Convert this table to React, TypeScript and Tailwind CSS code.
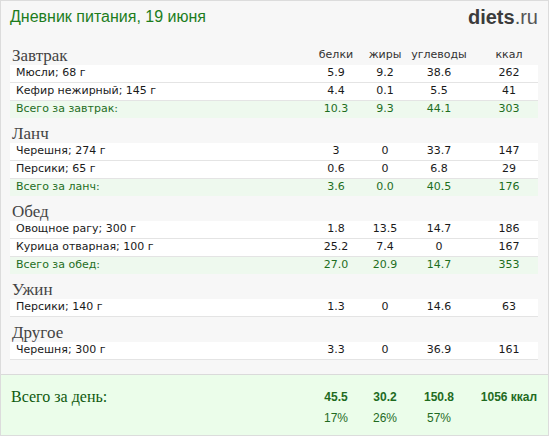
import React from "react";

type Item = { name: string; p: string; f: string; c: string; k: string };
type Section = { title: string; items: Item[]; total?: { label: string; p: string; f: string; c: string; k: string } };

const sections: Section[] = [
  {
    title: "Завтрак",
    items: [
      { name: "Мюсли; 68 г", p: "5.9", f: "9.2", c: "38.6", k: "262" },
      { name: "Кефир нежирный; 145 г", p: "4.4", f: "0.1", c: "5.5", k: "41" },
    ],
    total: { label: "Всего за завтрак:", p: "10.3", f: "9.3", c: "44.1", k: "303" },
  },
  {
    title: "Ланч",
    items: [
      { name: "Черешня; 274 г", p: "3", f: "0", c: "33.7", k: "147" },
      { name: "Персики; 65 г", p: "0.6", f: "0", c: "6.8", k: "29" },
    ],
    total: { label: "Всего за ланч:", p: "3.6", f: "0.0", c: "40.5", k: "176" },
  },
  {
    title: "Обед",
    items: [
      { name: "Овощное рагу; 300 г", p: "1.8", f: "13.5", c: "14.7", k: "186" },
      { name: "Курица отварная; 100 г", p: "25.2", f: "7.4", c: "0", k: "167" },
    ],
    total: { label: "Всего за обед:", p: "27.0", f: "20.9", c: "14.7", k: "353" },
  },
  {
    title: "Ужин",
    items: [{ name: "Персики; 140 г", p: "1.3", f: "0", c: "14.6", k: "63" }],
  },
  {
    title: "Другое",
    items: [{ name: "Черешня; 300 г", p: "3.3", f: "0", c: "36.9", k: "161" }],
  },
];

function Cols({ p, f, c, k }: { p: React.ReactNode; f: React.ReactNode; c: React.ReactNode; k: React.ReactNode }) {
  return (
    <>
      <div className="w-[50px] text-center">{p}</div>
      <div className="w-[48px] text-center">{f}</div>
      <div className="w-[60px] text-center">{c}</div>
      <div className="w-[11px]" />
      <div className="w-[58px] text-center">{k}</div>
    </>
  );
}

export default function App() {
  return (
    <div className="w-[549px] h-[436px] border border-[#dcdcdc] bg-[#f7f7f7] flex flex-col font-['DejaVu_Sans',sans-serif] text-[11px]">
      <div className="h-[39px] flex items-start justify-between pl-[9px] pr-[10px] pt-[6px]">
        <div className="text-[16px] leading-[20px] text-[#1d7d1d] font-['Liberation_Sans',sans-serif]">
          Дневник питания, 19 июня
        </div>
        <div className="text-[20px] leading-[20px] font-['Liberation_Sans',sans-serif] text-[#3c3c3c]">
          <span className="font-bold">diets</span>
          <span className="text-[#555]">.ru</span>
        </div>
      </div>
      <div className="pl-[9px] pr-[10px] flex flex-col">
        {sections.map((s, si) => (
          <div key={s.title} className="flex flex-col">
            <div className="h-[25px] pt-[7px] flex items-start">
              <div className="flex-1 flex items-center h-[17px] pl-[2px] text-[17px] text-[#444] font-['Liberation_Serif',serif]">
                {s.title}
              </div>
              {si === 0 && (
                <div className="flex items-center h-[17px] text-[#333]">
                  <Cols p="белки" f="жиры" c="углеводы" k="ккал" />
                </div>
              )}
            </div>
            {s.items.map((it) => (
              <div key={it.name} className="h-[18px] bg-white border-b border-[#e4e4e4] flex items-center text-[#1a1a1a]">
                <div className="flex-1 pl-[6px]">{it.name}</div>
                <Cols p={it.p} f={it.f} c={it.c} k={it.k} />
              </div>
            ))}
            {s.total && (
              <div className="h-[17px] bg-[#eef9ee] flex items-center text-[#1e6e1e]">
                <div className="flex-1 pl-[6px]">{s.total.label}</div>
                <Cols p={s.total.p} f={s.total.f} c={s.total.c} k={s.total.k} />
              </div>
            )}
          </div>
        ))}
      </div>
      <div className="mt-auto h-[61px] border-t border-[#dadada] bg-[#ebfdea] pl-[9px] pr-[10px] pt-[12px] flex items-start">
        <div className="flex-1 pl-[1px] text-[16px] leading-[20px] text-[#0f5a0f] font-['Liberation_Serif',serif]">
          Всего за день:
        </div>
        <div className="flex flex-col font-['Liberation_Sans',sans-serif] text-[#1f6b1f]">
          <div className="flex items-center h-[20px] text-[12px] font-bold">
            <Cols p="45.5" f="30.2" c="150.8" k="1056 ккал" />
          </div>
          <div className="flex items-center h-[22px] text-[12px]">
            <Cols p="17%" f="26%" c="57%" k="" />
          </div>
        </div>
      </div>
    </div>
  );
}
